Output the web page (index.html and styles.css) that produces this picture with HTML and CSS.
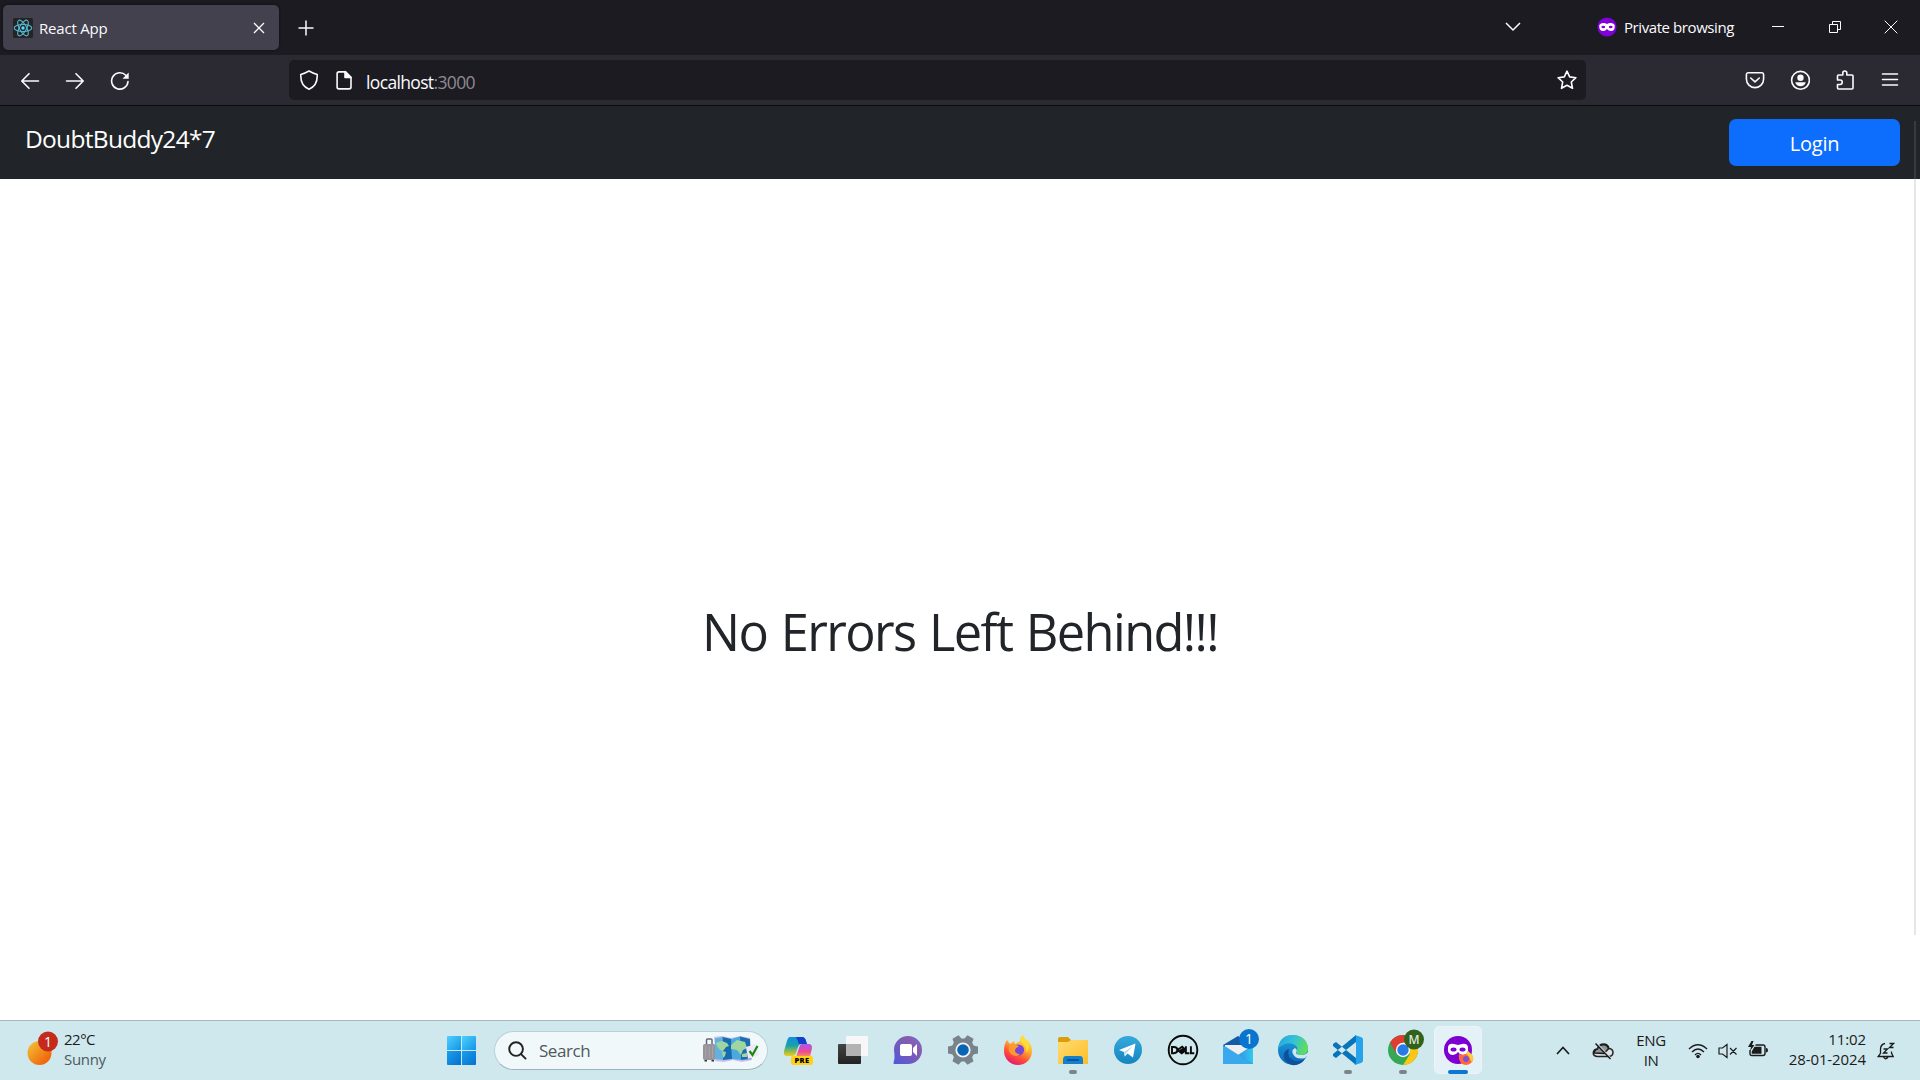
FILE: index.html
```html
<!DOCTYPE html>
<html lang="en">
<head>
<meta charset="utf-8">
<title>React App</title>
<link rel="stylesheet" href="styles.css">
</head>
<body>
<div class="screen">
  <header class="tabstrip">
    <div class="tab">
      <svg class="favicon" viewBox="0 0 20 20"><rect width="20" height="20" rx="1.5" fill="#242424"/><g fill="none" stroke="#53b9d3" stroke-width="1.1"><ellipse cx="10" cy="10" rx="8.8" ry="3.5"/><ellipse cx="10" cy="10" rx="8.8" ry="3.5" transform="rotate(60 10 10)"/><ellipse cx="10" cy="10" rx="8.8" ry="3.5" transform="rotate(120 10 10)"/></g><circle cx="10" cy="10" r="1.7" fill="#61dafb"/></svg>
      <span class="tab-title">React App</span>
      <svg class="tab-close" viewBox="0 0 12 12"><path d="M1 1l10 10M11 1L1 11"/></svg>
    </div>
    <svg class="new-tab" viewBox="0 0 16 16"><path d="M8 .5v15M.5 8h15"/></svg>
    <div class="window-side">
      <svg class="list-tabs" viewBox="0 0 16 10"><path d="M1 1l7 7 7-7"/></svg>
      <svg class="mask" viewBox="0 0 20 20"><circle cx="10" cy="10" r="9.6" fill="#8000d7"/><path d="M2.2 8.5Q3 6 6.4 6Q8.5 6 10 7Q11.500 6 13.600 6Q17 6 17.800 8.500Q18 14 13.800 14Q11.500 14 10 12Q8.500 14 6.200 14Q2 14 2.200 8.500z" fill="#fff"/><ellipse cx="6.300" cy="10" rx="1.900" ry="1.300" fill="#8000d7"/><ellipse cx="13.700" cy="10" rx="1.900" ry="1.300" fill="#8000d7"/></svg>
      <span class="private-label">Private browsing</span>
      <svg class="win minimise" viewBox="0 0 14 14"><path d="M1 6.500h12"/></svg>
      <svg class="win restore" viewBox="0 0 14 14"><path d="M1.500 4.500h8v8h-8zM4.500 4.500v-3h8v8h-3"/></svg>
      <svg class="win close" viewBox="0 0 14 14"><path d="M.7.7l12.600 12.600M13.300.7L.7 13.300"/></svg>
    </div>
  </header>

  <div class="toolbar">
    <div class="nav-buttons">
      <svg viewBox="0 0 20 20"><path d="M18.500 10H2M9 2.700L1.800 10 9 17.300"/></svg>
      <svg viewBox="0 0 20 20"><path d="M1.500 10H18M11 2.700L18.200 10 11 17.300"/></svg>
      <svg viewBox="0 0 20 20"><path d="M18 10.500A8.200 8.200 0 1 1 15.800 4.300"/><path d="M18.700 1.400v6.400h-6.200z" fill="#fbfbfe" stroke="none"/></svg>
    </div>
    <div class="urlbar">
      <svg class="shield" viewBox="0 0 20 20"><path d="M10 1Q14 3.300 18.200 4.400Q18.800 15.800 10 19.200Q1.200 15.800 1.800 4.400Q6 3.300 10 1z"/></svg>
      <svg class="doc" viewBox="0 0 16 20"><path d="M3 1.900h6.500l5.500 5.500V17a1.900 1.900 0 0 1-1.900 1.900H3A1.900 1.900 0 0 1 1.100 17V3.800A1.900 1.900 0 0 1 3 1.900z"/><path d="M9 1.500v6h6z" fill="#fbfbfe"/></svg>
      <span class="url">localhost<span class="port">:3000</span></span>
      <svg class="star" viewBox="0 0 20 20"><path d="M10 1.200l2.700 5.700 6.200.8-4.600 4.300 1.200 6.300-5.500-3.100-5.500 3.100 1.200-6.300L1.100 7.700l6.200-.8z"/></svg>
    </div>
    <div class="tools">
      <svg viewBox="0 0 20 20"><path d="M3 2.800h14A1.700 1.700 0 0 1 18.600 4.500V9a8.600 8.600 0 0 1-17.200 0V4.500A1.700 1.700 0 0 1 3 2.800zM5.700 8L10 11.800 14.300 8"/></svg>
      <svg viewBox="0 0 20 20"><circle cx="10.500" cy="10.300" r="8.900"/><circle cx="10.500" cy="7.800" r="3.200" fill="#fbfbfe" stroke="none"/><path d="M5.200 12.300h10.600Q14.500 16.300 10.500 16.300T5.200 12.300z" fill="#fbfbfe" stroke="none"/></svg>
      <svg viewBox="0 0 20 20"><path d="M2.500 9V6q0-1 1-1H7.800V3a2 2 0 0 1 4 0V5H17q1 0 1 1v12q0 1-1 1H3.500q-1 0-1-1V14.500H5a2.200 2.200 0 0 0 0-4.500H2.500z"/></svg>
      <svg viewBox="0 0 20 20"><path d="M2.500 4h15M2.500 9.500h15M2.500 15h15"/></svg>
    </div>
  </div>

  <main class="page">
    <nav class="navbar">
      <span class="brand">DoubtBuddy24*7</span>
      <button class="login"><span>Login</span></button>
    </nav>
    <section class="hero"><h1>No Errors Left Behind!!!</h1></section>
    <div class="scroll-thumb"></div>
  </main>

  <footer class="taskbar">
    <div class="weather">
      <svg class="sun" viewBox="0 0 32 36"><defs><linearGradient id="sun" x1="0" y1="0" x2="1" y2="1"><stop offset=".1" stop-color="#f1bd35"/><stop offset=".8" stop-color="#f1670b"/></linearGradient></defs><circle cx="12.500" cy="22" r="12" fill="url(#sun)"/><circle cx="21" cy="10.500" r="10" fill="#c42b1c"/><text x="21" y="15.500" class="badge-text">1</text></svg>
      <div class="weather-text"><span class="temp">22°C</span><span class="sky">Sunny</span></div>
    </div>

    <svg class="start" viewBox="0 0 29 29"><defs><linearGradient id="win" x1="0" y1="0" x2="1" y2="1" gradientUnits="objectBoundingBox"><stop stop-color="#4fd0ff"/><stop offset="1" stop-color="#1494e4"/></linearGradient><linearGradient id="win2" x1="0" y1="0" x2="1" y2="1"><stop stop-color="#1ba0ec"/><stop offset="1" stop-color="#0470d0"/></linearGradient></defs><path d="M1 0h13v14H0V1q0-1 1-1z" fill="url(#win)"/><path d="M15 0h13q1 0 1 1v13H15z" fill="url(#win)"/><path d="M0 15h14v14H1q-1 0-1-1z" fill="url(#win2)"/><path d="M15 15h14v13q0 1-1 1H15z" fill="url(#win2)"/></svg>

    <div class="search">
      <svg class="lens" viewBox="0 0 20 20"><circle cx="8.500" cy="8.500" r="7.200"/><path d="M13.500 13.500L18.500 18.500"/></svg>
      <span class="search-label">Search</span>
      <svg class="travel" viewBox="0 0 58 28"><path d="M4.500 8V4q0-1 1-1h3.500q1 0 1 1v4" fill="none" stroke="#69647b" stroke-width="1.500"/><rect x="1" y="8" width="12.500" height="16" rx="2" fill="#969399"/><path d="M3.800 10v12M7.200 10v12M10.600 10v12" stroke="#aaa7ab" stroke-width="1"/><path d="M2.500 24h2.500v1.500H2.500zM9.500 24h2.500v1.500H9.500z" fill="#333"/><path d="M12 1l8-1 9 2 9-2 10 2 2 22-10 2-9-2-9 2-9-1 1-4z" fill="#c9bdf0"/><path d="M13 2.500L20.500 1 21 24 13 23z" fill="#61b3dd"/><path d="M20.500 1L29.500 3l.5 20-9 1z" fill="#136daf"/><path d="M29.500 3L38 0.500 39 24l-9-1z" fill="#4baadd"/><path d="M38 .5l10 2.500.5 20-9.500 1z" fill="#1c6fae"/><path d="M14 7l6-2 5 2 2 3-3 1-3 4-3-1-3-4zM20 15l4 1-1 4-2 2zM29 9l6-5 8 2 2 6-4 2-2 5-4-5-6-1zM40 18l5-1v4h-5z" fill="#a0d5a1"/><path d="M44 11l10-3 3 11-11 4z" fill="#efe8f8"/><path d="M47.500 15l3 4 5-9" fill="none" stroke="#198a12" stroke-width="2.200"/></svg>
    </div>

    <div class="apps">
      <div class="app"><svg viewBox="0 0 32 32"><defs><linearGradient id="cpa" x1="0" y1="0" x2="0" y2="1"><stop stop-color="#168be0"/><stop offset=".45" stop-color="#16a2a8"/><stop offset="1" stop-color="#f0ce13"/></linearGradient><linearGradient id="cpb" x1="0" y1="0" x2="0" y2="1"><stop stop-color="#ad56ed"/><stop offset=".6" stop-color="#ed4a91"/><stop offset="1" stop-color="#f89c55"/></linearGradient></defs><path d="M8 3h12q3 0 4 4l1 3h-5q-3 0-4 3l-2 6q-1 3-4 3H5Q1 22 2 17L5 7q1-4 3-4z" fill="url(#cpa)"/><path d="M14 3h6q3 0 4 4l1 3h-7q-2 0-2-3z" fill="#113fce"/><path d="M20 10h7q3 0 3 4l-2 9H14l3-9q1-4 3-4z" fill="url(#cpb)"/><rect x="9" y="22" width="22" height="9" rx="2" fill="#ffd21a"/><text x="20" y="29.300" class="pre">PRE</text></svg></div>
      <div class="app"><svg viewBox="0 0 32 32"><defs><linearGradient id="tv" x1="0" y1="0" x2="0" y2="1"><stop stop-color="#444"/><stop offset="1" stop-color="#222"/></linearGradient></defs><rect x="1" y="10" width="23" height="20" rx="1" fill="url(#tv)"/><rect x="9" y="2" width="22" height="20" rx="1" fill="#f7f7f7"/><path d="M9 10h15v12H9z" fill="#b3b3b3"/></svg></div>
      <div class="app"><svg viewBox="0 0 32 32"><defs><linearGradient id="ch" x1="1" y1="0" x2="0" y2="1"><stop stop-color="#6d77d6"/><stop offset=".3" stop-color="#875cae"/><stop offset="1" stop-color="#5058d8"/></linearGradient></defs><path d="M16 2a14 14 0 0 1 0 28H2q-1 0 0-3 1-3 0-11A14 14 0 0 1 16 2z" fill="url(#ch)"/><rect x="8" y="10" width="12" height="12" rx="2" fill="#fff"/><path d="M21 14l4-4v12l-4-4z" fill="#fff"/></svg></div>
      <div class="app"><svg viewBox="0 0 32 32"><g fill="#78838c"><circle cx="16" cy="16" r="11.500"/><path d="M12.500 1h7l1 5h-9zM12.500 31h7l1-5h-9z" transform="rotate(30 16 16)"/><path d="M12.500 1h7l1 5h-9zM12.500 31h7l1-5h-9z" transform="rotate(90 16 16)"/><path d="M12.500 1h7l1 5h-9zM12.500 31h7l1-5h-9z" transform="rotate(150 16 16)"/></g><circle cx="16" cy="16" r="6.700" fill="#0864b5" stroke="#f1f3f4" stroke-width="1.800"/></svg></div>
      <div class="app"><svg viewBox="0 0 32 32"><defs><linearGradient id="ff" x1=".8" y1="0" x2=".3" y2="1"><stop stop-color="#fff345"/><stop offset=".4" stop-color="#ffb02e"/><stop offset=".7" stop-color="#ff5235"/><stop offset="1" stop-color="#e41475"/></linearGradient></defs><path d="M5 6l3 4 4-3 1 3 5-3q0-4 3-6 1 4 5 6 4 4 4 10a14 14 0 0 1-28 0Q2 10 5 6z" fill="url(#ff)"/><circle cx="16.500" cy="16" r="5.600" fill="#7547db"/><path d="M8 11q5-3 9 2-3 0-4 3 0 4 5 4-4 4-9 0-4-4-1-9z" fill="#ff9831"/><path d="M21 1q1 4 5 7 3 6-2 11 1-7-5-11-1-4 2-7z" fill="#ffdb3c"/></svg></div>
      <div class="app running"><svg viewBox="0 0 32 32"><defs><linearGradient id="fo" x1="0" y1="0" x2="1" y2="1"><stop stop-color="#ffdc72"/><stop offset="1" stop-color="#fdbd26"/></linearGradient></defs><path d="M1 5q0-2 2-2h8l3 3h15q2 0 2 2v6H1z" fill="#dd9d08"/><path d="M1 8h10l3-2h15q2 0 2 2v22H1z" fill="url(#fo)"/><path d="M6 30v-4q0-4 3-4h14q3 0 3 4v4z" fill="#147fcb"/><path d="M10 26h12" stroke="#06468b" stroke-width="1.500"/></svg></div>
      <div class="app"><svg viewBox="0 0 32 32"><defs><linearGradient id="tg" x1="0" y1="0" x2="0" y2="1"><stop stop-color="#35a9df"/><stop offset="1" stop-color="#1685bd"/></linearGradient></defs><circle cx="16" cy="16" r="14" fill="url(#tg)"/><path d="M7 16L23.500 9.500 21 23.500 15.500 19.500 12.800 22.500 12 18z" fill="#fff"/><path d="M12 18l9-6-7.300 7.500-.9 3z" fill="#b7d9ed"/></svg></div>
      <div class="app"><svg viewBox="0 0 32 32"><circle cx="16" cy="16" r="14.300" fill="none" stroke="#0a0a0a" stroke-width="1.900"/><g fill="none" stroke="#0a0a0a" stroke-width="1.900"><path d="M5 13v6.200h1.800q3.600 0 3.600-3.100T6.800 13z"/><path d="M10.400 16l4.700-3.200 1.900 1.500-4 2.500 1 .8 3.900-2.600M10.400 16l4.300 3.300 3.600-2.500"/><path d="M18.900 12.300v6.900h3.500M23.900 12.300v6.900h3.400"/></g></svg></div>
      <div class="app"><svg class="badged" viewBox="0 0 38 38"><defs><linearGradient id="ma" x1="0" y1="0" x2="1" y2="0"><stop stop-color="#3593e4"/><stop offset="1" stop-color="#30c9ee"/></linearGradient></defs><path d="M1 17L16 8l15 9v19H1z" fill="#155ba8"/><path d="M3 17h26v6l-13 7-13-7z" fill="#f0efef"/><path d="M1 17l30 19H1z" fill="#39a8ec"/><path d="M31 17L16 27l15 9z" fill="url(#ma)"/><circle cx="27" cy="11" r="10" fill="#0975cf"/><text x="27" y="16.300" class="badge-text">1</text></svg></div>
      <div class="app"><svg viewBox="0 0 32 32"><defs><linearGradient id="ed" x1="0" y1=".2" x2="1" y2=".5"><stop stop-color="#25a7dc"/><stop offset=".5" stop-color="#35c1d8"/><stop offset="1" stop-color="#60df58"/></linearGradient><linearGradient id="ed2" x1="0" y1="0" x2="0" y2="1"><stop stop-color="#24a5db"/><stop offset="1" stop-color="#0965bd"/></linearGradient></defs><circle cx="16" cy="16" r="15" fill="url(#ed2)"/><path d="M1 14Q3 1 16 1q14 1 15 13 0 6-6 7-6 0-6-3 2-2 1-5Q13 5 1 14z" fill="url(#ed)"/><path d="M12 15q-3 9 6 12 6 1 10-2-5 7-13 6Q5 27 7 20q1-4 5-5z" fill="#0d519b"/><path d="M18 14q-4 2-2 6 3 6 12 4l4-4v-3q-3 4-7 4-7 0-6-3 2-2-1-4z" fill="#cfe8ee"/></svg></div>
      <div class="app running"><svg viewBox="0 0 32 32"><path d="M1 10l3-2 20 16v7L1 12zM1 22l3 2L24 8V1L1 20z" fill="#0875bb"/><path d="M23 1l6 2q2 1 2 2v22q0 1-2 2l-6 2q-1 0 1-2V3z" fill="#27a3ec"/></svg></div>
      <div class="app running"><svg class="badged" viewBox="0 0 38 38"><circle cx="16" cy="22" r="15" fill="#35a854"/><path d="M16 22L3 14.500A15 15 0 0 1 29 14.500H16z" fill="#df3d32"/><path d="M16 14.500h13A15 15 0 0 1 16 37l7-11z" fill="#fbc614"/><path d="M3 14.500l6.500 11.300L16 22v-7.500z" fill="#df3d32"/><circle cx="16" cy="22" r="7.200" fill="#f7faf9"/><circle cx="16" cy="22" r="5.700" fill="#267be9"/><circle cx="27" cy="11.500" r="10" fill="#30621e"/><text x="27" y="16" class="profile">M</text></svg></div>
      <div class="app active"><svg viewBox="0 0 32 32"><circle cx="16" cy="16" r="14" fill="#7c00d2"/><path d="M6 13q1-4 6-3l4 1 4-1q5-1 6 3 1 8-5 8-3 0-5-3-2 3-5 3-6 0-5-8z" fill="#fff"/><ellipse cx="11.500" cy="15.500" rx="3" ry="2" fill="#7c00d2"/><ellipse cx="20.500" cy="15.500" rx="3" ry="2" fill="#7c00d2"/><path d="M17 20l3 1 4-1 2-3 4 4q3 4-1 8-5 4-10 0-3-4-2-9z" fill="#ff6a32"/><path d="M26 17l4 4q3 4-1 7-1-6-5-8z" fill="#ffcf39"/><circle cx="24" cy="25" r="3" fill="#8450d7"/></svg></div>
    </div>

    <div class="tray">
      <svg class="overflow" viewBox="0 0 14 9"><path d="M1 8l6-6.500L13 8"/></svg>
      <svg class="cloud" viewBox="0 0 22 18"><path d="M5 14.500Q1 14 1.300 10.500 2 7 5.500 7 7 2 11.500 2 16 2 17 6.500 21 7 21 10.500 21 14 17 14.500z" fill="#dfe1e2" stroke="#222" stroke-width="1.500"/><path d="M5.500 7Q7 2.800 11.500 2.800T16.300 7L12 11.500 2.500 11Q2 8 5.500 7z" fill="#919496"/><path d="M5.500 2l13 14" stroke="#cfe8ee" stroke-width="1.200"/><path d="M3.500 1.500l15 15.500" stroke="#1b1b1b" stroke-width="1.500"/></svg>
      <div class="lang"><span>ENG</span><span>IN</span></div>
      <svg class="wifi" viewBox="0 0 20 16"><path d="M1 6q9-8.500 18 0M4 9q6-6 12 0M7 12q3-3.300 6 0"/><circle cx="10" cy="13.500" r="1.800" fill="#1b1b1b" stroke="none"/></svg>
      <svg class="volume" viewBox="0 0 20 16"><path d="M1 5h3.500L9 1.500v13L4.500 11H1zM12 5l6.500 6.500M18.500 5L12 11.500"/></svg>
      <svg class="battery" viewBox="0 0 20 16"><path d="M7.500 4H15q2 0 2 2v6.500q0 2-2 2H4q-2 0-2-2V9"/><path d="M6.500 5.800H13.500v7H3.700V10.500zM18 7q2 0 2 2.200t-2 2.200zM3.500 0L0 6h3l-1 4 4.500-6H4l1.500-4z" fill="#1b1b1b" stroke="none"/></svg>
      <div class="clock"><span class="time">11:02</span><span class="date">28-01-2024</span></div>
      <svg class="bell" viewBox="0 0 18 18"><path d="M8 1.500Q3.500 2.300 3.500 7.500v3.800L1.200 14.500h15L14.500 11V9.500M6.500 15q2 3.500 4.500 0M6.500 7h4l-4 4h4M12.500 1.500h4l-4 4h4"/></svg>
    </div>
  </footer>
</div>
</body>
</html>
```

FILE: styles.css
```css
* { box-sizing: border-box; }
body {
  margin: 0;
  font-family: "Open Sans", "Noto Sans", sans-serif;
  font-size: 15px;
}
svg { display: block; flex: none; }
span { white-space: nowrap; }

.screen {
  width: 1920px;
  height: 1080px;
  display: flex;
  flex-direction: column;
  overflow: hidden;
  background: #fff;
}

/* Browser window */
.tabstrip {
  height: 55px;
  display: flex;
  align-items: center;
  padding-left: 3px;
  background: #1c1b22;
  color: #fbfbfe;
  fill: none;
  stroke: #fbfbfe;
  stroke-width: 1.3;
}
.tab {
  width: 276px;
  height: 45px;
  display: flex;
  align-items: center;
  padding: 0 14px 0 10px;
  border-radius: 5px;
  background: #42414d;
  box-shadow: 0 0 3px #0c0c0d;
}
.favicon { width: 20px; height: 20px; stroke: none; }
.tab-title { margin-left: 6px; font-size: 15px; letter-spacing: -0.2px; line-height: 20px; padding-top: 1px; }
.tab-close { width: 12px; height: 12px; margin-left: auto; }
.new-tab { width: 16px; height: 16px; margin-left: 19px; stroke-width: 1.5; }
.window-side { margin: -1px 0 0 auto; display: flex; align-items: center; }
.list-tabs { width: 16px; height: 10px; stroke-width: 1.5; }
.mask { width: 20px; height: 20px; margin-left: 76px; stroke: none; }
.private-label { width: 110px; margin-left: 7px; font-size: 15px; letter-spacing: -0.42px; }
.win { width: 14px; height: 14px; stroke-width: 1; }
.minimise { margin-left: 37px; }
.restore { margin-left: 43px; }
.close { margin: 0 22px 0 42px; }

.toolbar {
  height: 51px;
  display: flex;
  align-items: center;
  border-bottom: 1px solid #0c0c0d;
  background: #2b2a33;
  color: #fbfbfe;
  fill: none;
  stroke: #fbfbfe;
  stroke-width: 1.6;
  stroke-linecap: round;
  stroke-linejoin: round;
}
.toolbar svg { width: 20px; height: 20px; }
.nav-buttons { width: 289px; display: flex; gap: 25px; padding: 1px 0 0 20px; }
.urlbar {
  width: 1297px;
  height: 40px;
  display: flex;
  align-items: center;
  padding: 0 9px 0 10px;
  border-radius: 5px;
  background: #1c1b22;
}
.toolbar .doc { width: 16px; margin-left: 17px; }
.url { margin-left: 14px; padding-top: 3px; font-size: 17.5px; letter-spacing: -0.65px; }
.port { color: #8c8b91; }
.star { margin-left: auto; }
.tools { display: flex; gap: 25px; margin-left: auto; padding-right: 20px; }

/* Page content */
.page { position: relative; flex: 1; display: flex; flex-direction: column; }
.navbar {
  height: 73px;
  display: flex;
  justify-content: space-between;
  align-items: flex-start;
  padding: 13px 20px 0 25px;
  background: #212529;
  color: #fff;
}
.brand { font-size: 24.5px; line-height: 40px; letter-spacing: -0.7px; }
.login {
  width: 171px;
  height: 47px;
  padding: 1px 0 0;
  border: 0;
  border-radius: 7px;
  background: #0d6efd;
  color: #fff;
  font-family: inherit;
  font-size: 20px;
  letter-spacing: -0.25px;
}
.hero { height: 841px; display: flex; justify-content: center; padding-top: 419px; }
.hero h1 {
  margin: 0;
  color: #212529;
  font-size: 50.5px;
  font-weight: 400;
  line-height: 68px;
  letter-spacing: -1.6px;
  word-spacing: 2px;
  white-space: nowrap;
}
.scroll-thumb {
  position: absolute;
  top: 15px;
  right: 4px;
  width: 2px;
  height: 814px;
  background: rgba(140, 140, 140, .22);
}

/* Taskbar */
.taskbar {
  height: 60px;
  display: flex;
  align-items: center;
  border-top: 1px solid #a8b7bd;
  background: #cfe8ee;
  color: #1b1b1b;
}
.weather { width: 447px; display: flex; padding-left: 27px; margin-top: -3px; }
.sun { width: 32px; height: 36px; margin-top: 2px; }
.weather-text { display: flex; flex-direction: column; margin-left: 5px; line-height: 20px; }
.temp { letter-spacing: -0.5px; }
.sky { color: #4c5a5f; letter-spacing: -0.3px; }
.start { width: 29px; height: 29px; }
.search {
  width: 274px;
  height: 39px;
  display: flex;
  align-items: center;
  margin: -1px 0 0 18px;
  padding: 0 7px 0 13px;
  border: 1px solid #b9d1d8;
  border-bottom-color: #9eb4ba;
  border-radius: 20px;
  background: #f0f8fa;
}
.lens { width: 19px; height: 19px; fill: none; stroke: #222; stroke-width: 2; stroke-linecap: round; }
.search-label { margin-left: 12px; color: #50595c; font-size: 17px; letter-spacing: -0.45px; }
.travel { width: 58px; height: 28px; margin-left: auto; overflow: visible; }
.apps { display: flex; margin-left: 2px; }
.app {
  position: relative;
  width: 55px;
  height: 59px;
  display: grid;
  place-items: center;
}
.app svg { position: relative; width: 32px; height: 32px; margin-top: -1px; }
.app .badged { width: 38px; height: 38px; margin: -7px 0 0 6px; }
.running::after, .active::after {
  content: "";
  position: absolute;
  bottom: 6px;
  left: 24px;
  width: 8px;
  height: 4px;
  border-radius: 2px;
  background: #7b8588;
}
.active::after { left: 18px; width: 20px; background: #0878d4; }
.active::before {
  content: "";
  position: absolute;
  inset: 5px 3px 6px 4px;
  border: 1px solid #edf3f6;
  border-radius: 5px;
  background: #e4f2f7;
}
.badge-text { fill: #fff; font-size: 14px; text-anchor: middle; }
.pre { font-size: 7.5px; font-weight: 800; text-anchor: middle; letter-spacing: .3px; }
.profile { fill: #dce6d8; font-size: 12px; font-weight: 600; text-anchor: middle; }

.tray { flex: 1; display: flex; align-items: center; fill: none; stroke: #1b1b1b; stroke-width: 1.4; }
.tray span { stroke: none; }
.overflow { width: 14px; height: 9px; margin-left: 71px; stroke-width: 1.7; }
.cloud { width: 22px; height: 18px; margin-left: 22px; }
.lang { width: 40px; display: flex; flex-direction: column; align-items: center; margin: -2px 0 0 17px; line-height: 20px; letter-spacing: -0.4px; }
.wifi { width: 20px; height: 16px; margin-left: 17px; }
.volume { width: 20px; height: 16px; margin: 0 0 0 10px; stroke-width: 1.2; }
.battery { width: 20px; height: 16px; margin: -3px 0 0 10px; }
.clock { width: 98px; display: flex; flex-direction: column; align-items: flex-end; margin-top: -3px; line-height: 20px; letter-spacing: -0.1px; }
.bell { width: 18px; height: 18px; margin-left: 11px; stroke-width: 1.3; }
```
